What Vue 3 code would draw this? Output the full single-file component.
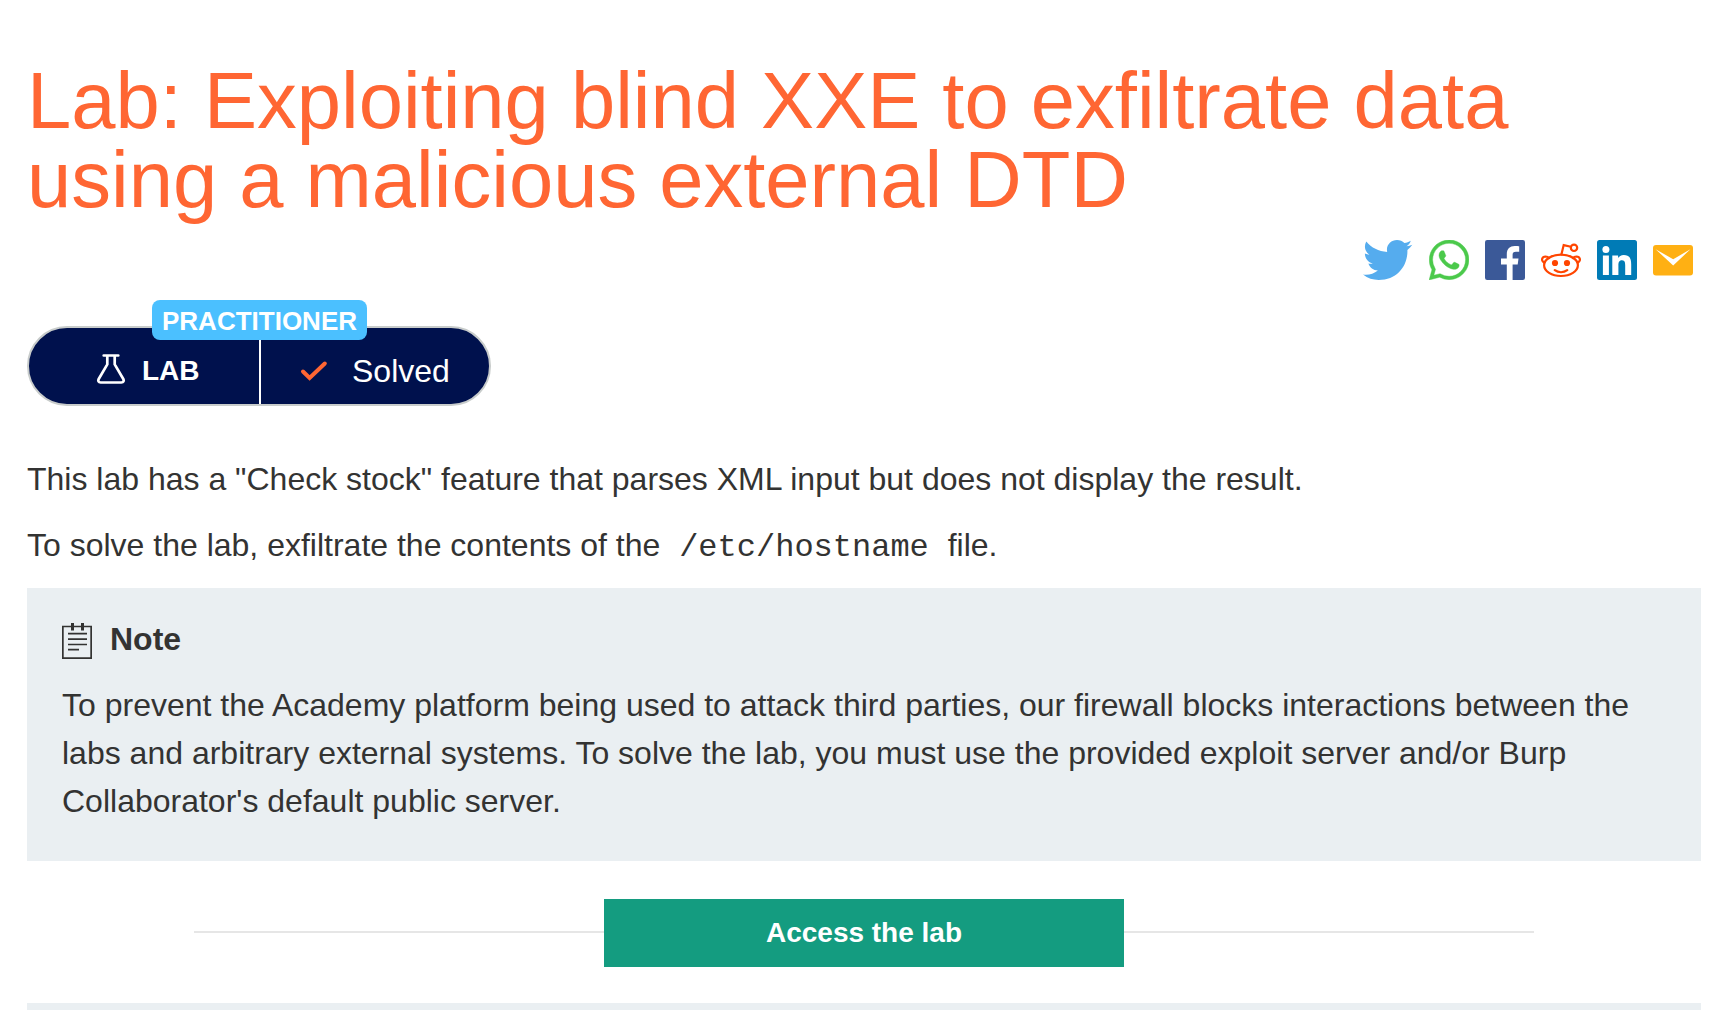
<script setup>
const title = 'Lab: Exploiting blind XXE to exfiltrate data using a malicious external DTD'
</script>

<template>
  <main class="page">
    <h1 class="title">{{ title }}</h1>

    <nav class="share">
      <a class="share-link" aria-label="Twitter">
        <svg viewBox="0 0 50 40" width="50" height="40">
          <path fill="#55acee" d="M0 34.6c5.4.8 10.6-.6 14.9-4-4.600-.1-8.100-2.900-9.500-7 1.600.3 3 .2 4.500-.2-4.900-1.100-8-5-8-9.900 1.400.7 3 1.200 4.500 1.200C1.800 11.500.7 6.400 3.300 1.600c5.200 6.200 12.200 9.900 20.900 10.400C22.700 5.300 27.700 0 34 0c3 0 5.500 1.200 7.400 3.100 2.300-.4 4.500-1.300 6.400-2.400-.8 2.400-2.300 4.300-4.300 5.600 2-.2 4-.7 5.800-1.500-1.300 2-3 3.700-4.900 5.100C45 25.500 34.500 40 15.700 40 10 40 4.700 38.500 0 34.600z"/>
        </svg>
      </a>
      <a class="share-link" aria-label="WhatsApp">
        <svg viewBox="0 0 24 24" width="40" height="40">
          <path fill="#4bc94b" d="M17.472 14.382c-.297-.149-1.758-.867-2.030-.967-.273-.099-.471-.148-.67.150-.197.297-.767.966-.94 1.164-.173.199-.347.223-.644.075-.297-.150-1.255-.463-2.390-1.475-.883-.788-1.480-1.761-1.653-2.059-.173-.297-.018-.458.130-.606.134-.133.298-.347.446-.520.149-.174.198-.298.298-.497.099-.198.050-.371-.025-.520-.075-.149-.669-1.612-.916-2.207-.242-.579-.487-.5-.669-.510-.173-.008-.371-.010-.570-.010-.198 0-.520.074-.792.372-.272.297-1.040 1.016-1.040 2.479 0 1.462 1.065 2.875 1.213 3.074.149.198 2.096 3.200 5.077 4.487.709.306 1.262.489 1.694.625.712.227 1.360.195 1.871.118.571-.085 1.758-.719 2.006-1.413.248-.694.248-1.289.173-1.413-.074-.124-.272-.198-.570-.347m-5.421 7.403h-.004a9.870 9.870 0 0 1-5.031-1.378l-.361-.214-3.741.982.998-3.648-.235-.374a9.860 9.860 0 0 1-1.510-5.260c.001-5.450 4.436-9.884 9.888-9.884 2.640 0 5.122 1.030 6.988 2.898a9.825 9.825 0 0 1 2.893 6.994c-.003 5.450-4.437 9.884-9.885 9.884m8.413-18.297A11.815 11.815 0 0 0 12.050 0C5.495 0 .160 5.335.157 11.892c0 2.096.547 4.142 1.588 5.945L.057 24l6.305-1.654a11.882 11.882 0 0 0 5.683 1.448h.005c6.554 0 11.890-5.335 11.893-11.893a11.821 11.821 0 0 0-3.480-8.413z" stroke="#4bc94b" stroke-width=".25"/>
        </svg>
      </a>
      <a class="share-link" aria-label="Facebook">
        <svg viewBox="0 0 40 40" width="40" height="40">
          <rect width="40" height="40" rx="2.200" fill="#3b5998"/>
          <path fill="#fff" d="M21.800 40V24.400H16v-6h5.800v-4.300c0-5.200 3.200-8 7.900-8 2 0 3.800.1 4.500.2v5.400h-3.200c-2.600 0-3.400 1.200-3.400 3v3.700h5.900l-.8 6h-5.100V40z"/>
        </svg>
      </a>
      <a class="share-link" aria-label="Reddit">
        <svg viewBox="0 0 40 40" width="40" height="40">
          <g fill="none" stroke="#ff4500" stroke-width="2.200" stroke-linecap="round">
            <ellipse cx="20" cy="25.300" rx="16.900" ry="10.700"/>
            <path d="M3.300 22.700C-.5 20.300 1 16.700 4.600 16.500c1.400 0 2.600.5 3.400 1.600M36.700 22.700c3.800-2.400 2.300-6-1.300-6.200-1.400 0-2.600.5-3.400 1.600M20.400 14.400l2.300-9.300 7.200 1.600M13.800 30.200c3.600 2.700 8.800 2.700 12.400 0"/>
            <circle cx="33" cy="7.800" r="3.200"/>
          </g>
          <circle cx="14" cy="23" r="3.100" fill="#ff4500"/>
          <circle cx="26" cy="23" r="3.100" fill="#ff4500"/>
        </svg>
      </a>
      <a class="share-link" aria-label="LinkedIn">
        <svg viewBox="0 0 40 40" width="40" height="40">
          <rect width="40" height="40" rx="2.500" fill="#007bb6"/>
          <g fill="#fff">
            <circle cx="8.900" cy="9.400" r="3.500"/>
            <path d="M5.900 15.500h6V35h-6zM15.300 15.500h5.800v2.600c.9-1.600 2.900-3.100 5.700-3.100 6 0 7.400 3.900 7.400 9.300V35h-6v-9.500c0-2.300-.1-5.200-3.200-5.200s-3.600 2.500-3.600 5V35h-6.100z"/>
          </g>
        </svg>
      </a>
      <a class="share-link" aria-label="Email">
        <svg viewBox="0 0 40 40" width="40" height="40">
          <rect y="5" width="40" height="30.500" rx="3" fill="#ffb013"/>
          <path fill="#fff" d="M2.600 9.300 20.200 19.200 37.400 9.300 20.200 25.400z"/>
        </svg>
      </a>
    </nav>

    <div class="status">
      <span class="level">PRACTITIONER</span>
      <div class="half kind">
        <svg viewBox="0 0 30 32" width="30" height="32" fill="none" stroke="#fff" stroke-width="2.700" stroke-linecap="round" stroke-linejoin="round">
          <path d="M7.700 2.500h14.600M11.300 2.700v8.700L2.700 26c-1 1.900-.2 3.500 1.900 3.500h20.800c2.100 0 2.900-1.600 1.900-3.500l-8.600-14.600V2.700"/>
        </svg>
        <strong>LAB</strong>
      </div>
      <div class="half state">
        <svg viewBox="0 0 28 22" width="28" height="22">
          <path d="M3 11.500 9.600 18 24.800 3.500" fill="none" stroke="#ff6633" stroke-width="4" stroke-linecap="round"/>
        </svg>
        <span>Solved</span>
      </div>
    </div>

    <p class="text">This lab has a "Check stock" feature that parses XML input but does not display the result.</p>
    <p class="text">To solve the lab, exfiltrate the contents of the <code>/etc/hostname</code> file.</p>

    <section class="note">
      <h2 class="note-head">
        <svg viewBox="0 0 30 36" width="30" height="36" fill="none" stroke="#333332">
          <path stroke-width="1.700" d="M.85 3.500h28.300v31.600H.85z"/>
          <path stroke-width="3" d="M10.500 0v7.500M20.500 0v7.500"/>
          <path stroke-width="1.700" d="M6 10.700h19M6 16.200h19M6 21.500h19M6 26.600h11"/>
        </svg>
        Note
      </h2>
      <p class="note-text">To prevent the Academy platform being used to attack third parties, our firewall blocks interactions between the labs and arbitrary external systems. To solve the lab, you must use the provided exploit server and/or Burp Collaborator's default public server.</p>
    </section>

    <div class="launch">
      <button class="launch-button" type="button">Access the lab</button>
    </div>

    <section class="next-panel"></section>
  </main>
</template>

<style>
body {
  background: #fff;
  overflow: hidden;
}
</style>

<style scoped>
.page {
  box-sizing: border-box;
  width: 1726px;
  height: 1010px;
  padding: 61px 25px 0 27px;
  overflow: hidden;
  display: flex;
  flex-direction: column;
  font-family: "Liberation Sans", Arial, sans-serif;
  font-size: 32px;
  line-height: 48px;
  color: #333332;
}
.title {
  margin: 0;
  width: 1560px;
  font-size: 79.55px;
  line-height: 79px;
  font-weight: 400;
  color: #ff6633;
}
.share {
  display: flex;
  justify-content: flex-end;
  gap: 16px;
  margin-top: 21px;
  padding-right: 8px;
  height: 40px;
}
.share-link {
  display: block;
  height: 40px;
}
.share svg {
  display: block;
}
.status {
  position: relative;
  box-sizing: border-box;
  display: flex;
  width: 464px;
  height: 80px;
  margin-top: 46px;
  border: 2px solid #c8cccb;
  border-radius: 40px;
  background: #00114d;
  color: #fff;
}
.level {
  position: absolute;
  left: 123px;
  top: -28px;
  width: 215px;
  height: 40px;
  border-radius: 8px;
  background: #4bc0ff;
  font-size: 26px;
  font-weight: 700;
  line-height: 42px;
  text-align: center;
}
.half {
  display: flex;
  align-items: center;
}
.kind {
  box-sizing: border-box;
  width: 232px;
  padding: 10px 0 0 67px;
  gap: 16px;
  border-right: 2px solid #fff;
  font-size: 28px;
}
.kind svg {
  margin-bottom: 4px;
}
.state {
  padding: 10px 0 0 39px;
  gap: 24px;
}
.text {
  margin: 0 0 18px;
}
.status + .text {
  margin-top: 49px;
}
code {
  padding: 0 10px;
  font-family: "Liberation Mono", "Courier New", monospace;
  font-size: 32px;
  line-height: 32px;
}
.note {
  box-sizing: border-box;
  height: 273px;
  margin-top: 1px;
  padding: 27px 35px 0;
  background: #eaeff2;
}
.note-head {
  display: flex;
  align-items: center;
  gap: 18px;
  margin: 0 0 18px;
  font-size: 32px;
  line-height: 48px;
}
.note-head svg {
  margin-top: 4px;
}
.note-text {
  margin: 0;
}
.launch {
  display: flex;
  align-items: center;
  width: 1340px;
  margin: 38px auto 36px;
}
.launch::before,
.launch::after {
  content: "";
  flex: 1;
  height: 2px;
  margin-bottom: 2px;
  background: #e6e6e6;
}
.launch-button {
  width: 520px;
  height: 68px;
  padding: 0;
  border: 0;
  background: #149c80;
  color: #fff;
  font: 700 28px/68px "Liberation Sans", Arial, sans-serif;
}
.next-panel {
  flex: 1;
  background: #eaeff2;
}
</style>
